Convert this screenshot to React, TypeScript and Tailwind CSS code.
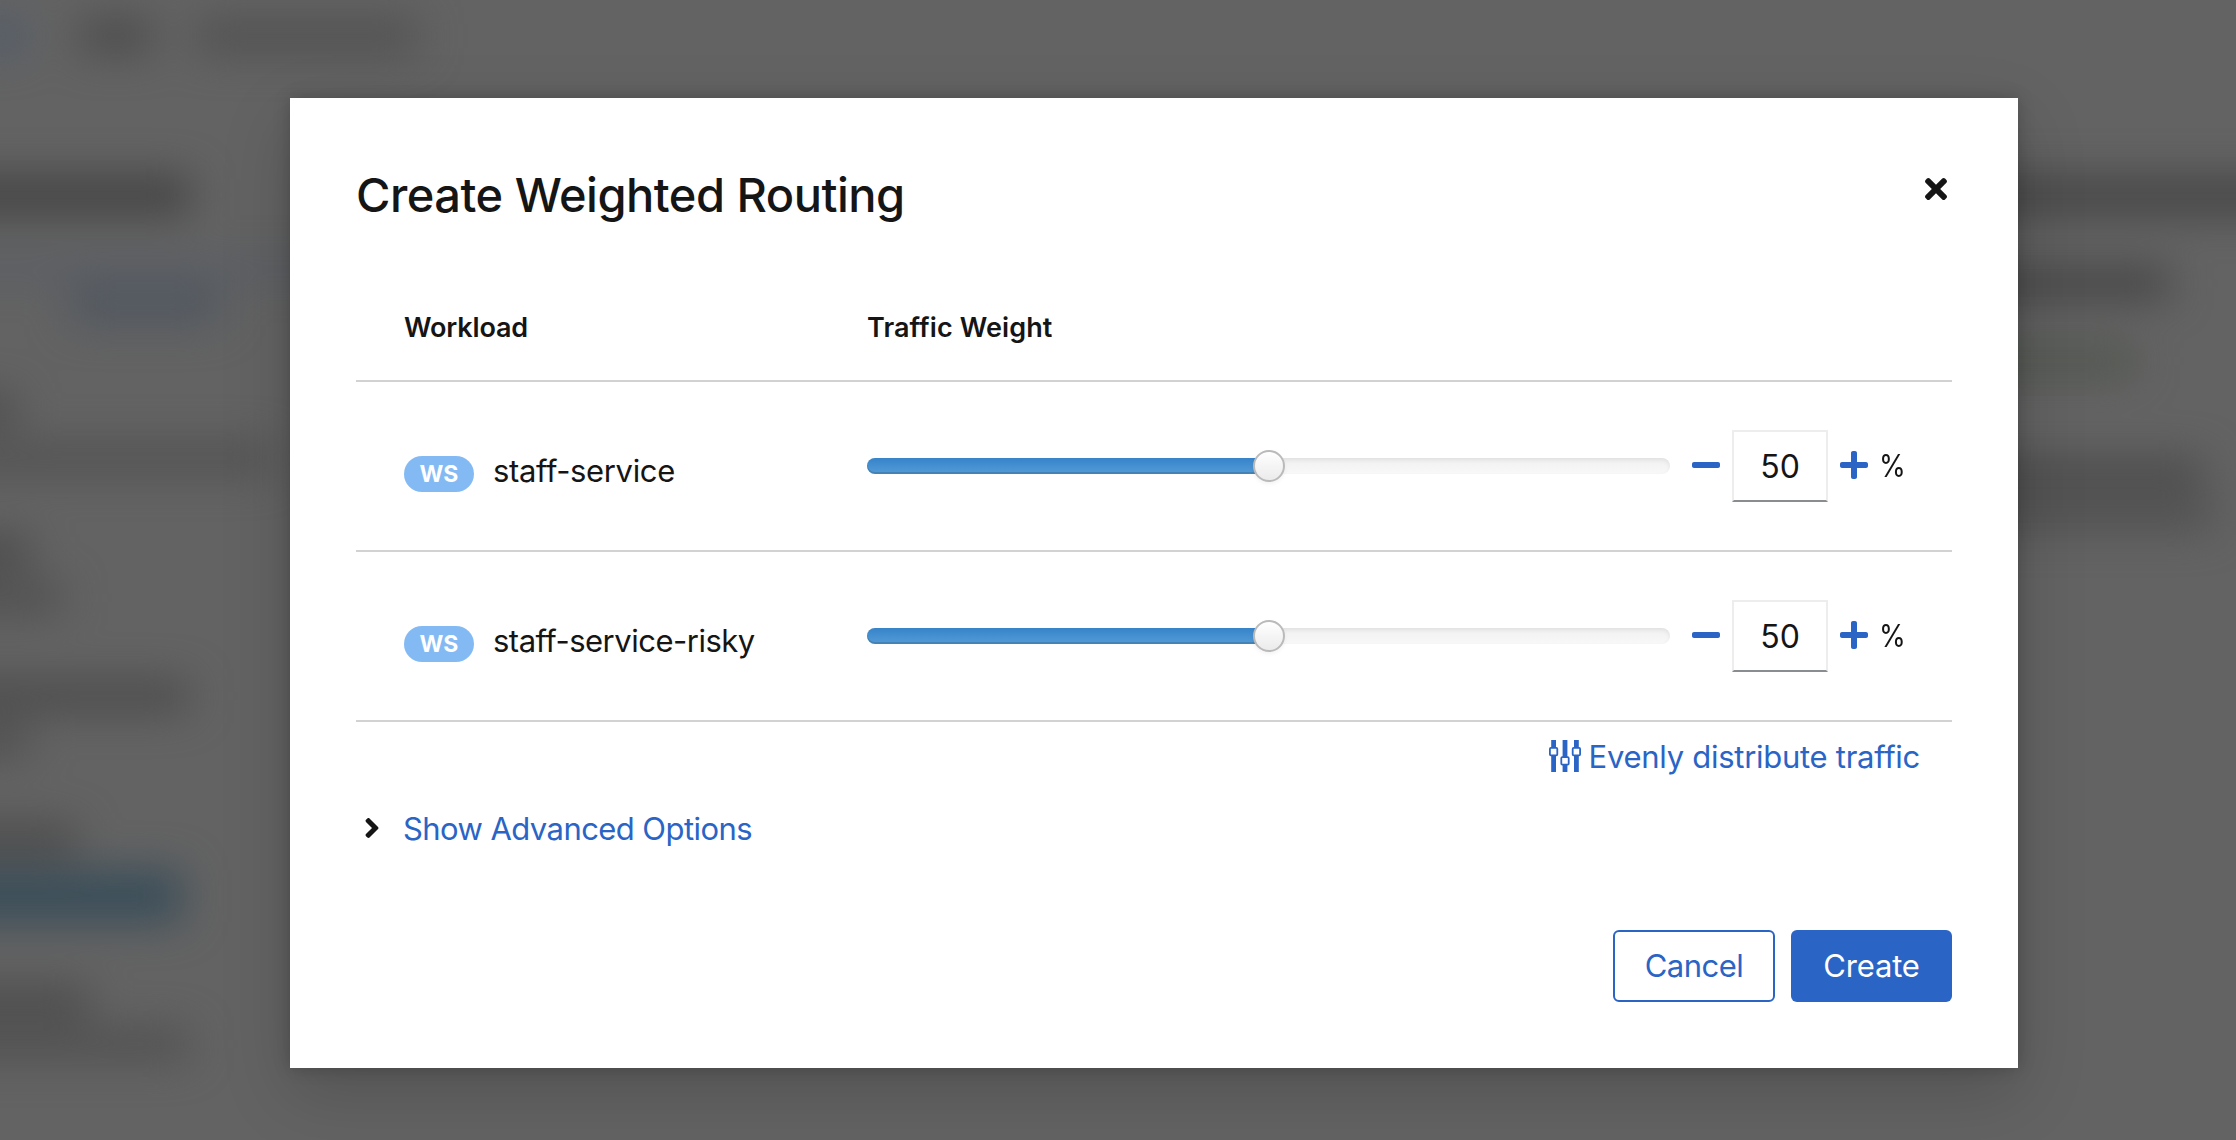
import React from "react";
import { FaAngleRight, FaMinus, FaPlus, FaTimes } from "react-icons/fa";

function EqualizerIcon() {
  return (
    <svg className="h-8 w-8 shrink-0" viewBox="0 0 32 32" fill="none">
      <g fill="#2a64c5">
        <rect x="2.2" y="0" width="4.8" height="8" />
        <rect x="2.2" y="15.5" width="4.8" height="16.5" />
        <rect x="13.6" y="0" width="4.8" height="17" />
        <rect x="13.6" y="24.5" width="4.8" height="7.5" />
        <rect x="25" y="0" width="4.8" height="8" />
        <rect x="25" y="15.5" width="4.8" height="16.5" />
      </g>
      <g stroke="#2a64c5" strokeWidth="1.8">
        <rect x="0.9" y="7.9" width="7.4" height="7.4" rx="1" />
        <rect x="12.3" y="17.2" width="7.4" height="7.4" rx="1" />
        <rect x="23.7" y="7.9" width="7.4" height="7.4" rx="1" />
      </g>
    </svg>
  );
}

function Backdrop() {
  return (
    <div className="absolute inset-0 flex justify-between overflow-hidden bg-[#636363]">
      <div className="flex w-[440px] flex-col items-start blur-[21px]">
        <div className="mt-5 flex h-8 w-full items-center">
          <div className="-ml-6 h-8 w-12 bg-[#505c6c]" />
          <div className="ml-[56px] h-8 w-[72px] bg-[#4a4a4a]" />
          <div className="ml-[44px] h-8 w-[222px] bg-[#505050]" />
        </div>
        <div className="-ml-16 mt-[125px] h-9 w-[254px] bg-[#414141]" />
        <div className="-ml-16 mt-[52px] h-[8px] w-[460px] bg-[#4a5568]" />
        <div className="ml-[70px] mt-[14px] h-9 w-[150px] bg-[#505760]" />
        <div className="-ml-16 mt-[73px] h-7 w-[80px] bg-[#484848]" />
        <div className="-ml-16 mt-[20px] h-7 w-[336px] bg-[#505050]" />
        <div className="-ml-16 mt-[66px] h-7 w-[94px] bg-[#464646]" />
        <div className="-ml-16 mt-[18px] h-7 w-[126px] bg-[#4d4d4d]" />
        <div className="-ml-16 mt-[70px] h-7 w-[252px] bg-[#484848]" />
        <div className="-ml-16 mt-[16px] h-7 w-[94px] bg-[#4d4d4d]" />
        <div className="-ml-16 mt-[72px] h-7 w-[140px] bg-[#474747]" />
        <div className="-ml-16 mt-[16px] h-[52px] w-[246px] bg-[#394d59]" />
        <div className="-ml-16 mt-[66px] h-7 w-[152px] bg-[#484848]" />
        <div className="-ml-16 mt-[14px] h-7 w-[252px] bg-[#4e4e4e]" />
      </div>
      <div className="flex w-[300px] flex-col items-start blur-[21px]">
        <div className="mt-[178px] h-9 w-[380px] bg-[#444444]" />
        <div className="mt-[55px] h-7 w-[232px] bg-[#404040]" />
        <div className="mt-[50px] h-7 w-[198px] bg-[#4e544b]" />
        <div className="mt-[84px] h-7 w-[268px] bg-[#494949]" />
        <div className="mt-[13px] h-7 w-[276px] bg-[#4e4e4e]" />
      </div>
    </div>
  );
}

function WeightSlider() {
  return (
    <div className="relative h-4 w-[803px] rounded-full bg-linear-to-b from-[#f0f0f0] to-[#f8f8f8] shadow-[inset_0_2px_4px_rgba(0,0,0,0.07)]">
      <div className="h-4 w-1/2 rounded-l-full bg-linear-to-b from-[#3783ca] to-[#539cd6] shadow-[inset_0_-2px_0_rgba(0,0,0,0.15)]" />
      <div className="absolute -top-2 left-[386px] h-8 w-8 rounded-full border-2 border-[#bababa] bg-linear-to-b from-white to-[#ebebeb] shadow-[0_2px_4px_rgba(0,0,0,0.05)]" />
    </div>
  );
}

function WorkloadRow({ name, tracking }: { name: string; tracking: string }) {
  return (
    <div className="flex h-[170px] border-b-2 border-[#d2d2d2] pl-12">
      <div className="flex w-[463px] items-start pt-[67px]">
        <div className="mt-[7px] flex h-9 w-[70px] items-center justify-center rounded-full bg-[#84baf4] text-[23px] font-bold text-white">
          WS
        </div>
        <span className={`ml-[19px] mt-[2px] text-[31px] leading-10 ${tracking}`}>{name}</span>
      </div>
      <div className="mt-12 flex h-[72px] items-center self-start">
        <WeightSlider />
        <FaMinus className="-mt-0.5 ml-[22px] size-8 w-7 text-[#2a64c5]" />
        <div className="ml-3 flex h-[72px] w-24 items-center justify-center border-2 border-[#ededed] border-b-[#8a8d90] pt-0.5 text-[32px]">
          50
        </div>
        <FaPlus className="-mt-0.5 ml-3 size-8 w-7 text-[#2a64c5]" />
        <span className="ml-[11px] inline-block w-6 origin-left scale-x-[0.88] text-[31px]">%</span>
      </div>
    </div>
  );
}

export default function App() {
  return (
    <div className="relative h-[1140px] w-[2236px] overflow-hidden pl-[290px] pt-[98px] font-['Inter',sans-serif] text-[#151515]">
      <Backdrop />
      <div className="relative h-[970px] w-[1728px] bg-white px-[66px] shadow-[0_24px_64px_rgba(3,3,3,0.17),0_0_16px_rgba(3,3,3,0.2)]">
        <div className="flex h-[200px] items-start justify-between pr-[5px]">
          <h1 className="mt-[66px] text-[47px] font-medium leading-[62px] tracking-[-0.5px]">
            Create Weighted Routing
          </h1>
          <FaTimes className="mt-[75px] h-8 w-[22px]" />
        </div>
        <div className="flex h-[84px] border-b-2 border-[#d2d2d2] pl-12 pt-[10px] text-[27px] font-semibold leading-10">
          <div className="w-[463px] tracking-[-0.15px]">Workload</div>
          <div className="tracking-[0.1px]">Traffic Weight</div>
        </div>
        <WorkloadRow name="staff-service" tracking="tracking-[-0.35px]" />
        <WorkloadRow name="staff-service-risky" tracking="tracking-[-0.5px]" />
        <div className="flex h-[68px] items-center justify-end pr-[32px] text-[#2a64c5]">
          <EqualizerIcon />
          <span className="ml-2 mt-[2px] text-[31px] tracking-[-0.28px]">Evenly distribute traffic</span>
        </div>
        <div className="flex h-[76px] items-center">
          <FaAngleRight className="ml-2 h-8 w-4" />
          <span className="ml-[23px] mt-[2px] text-[31px] tracking-[-0.57px] text-[#2a64c5]">
            Show Advanced Options
          </span>
        </div>
        <div className="mt-16 flex justify-end gap-4 text-[31px] tracking-[-0.5px]">
          <button className="h-[72px] w-[162px] rounded-md border-2 border-[#2a64c5] text-[#2a64c5]">
            Cancel
          </button>
          <button className="h-[72px] w-[161px] rounded-md bg-[#2a64c5] tracking-[-0.2px] text-white">
            Create
          </button>
        </div>
      </div>
    </div>
  );
}
